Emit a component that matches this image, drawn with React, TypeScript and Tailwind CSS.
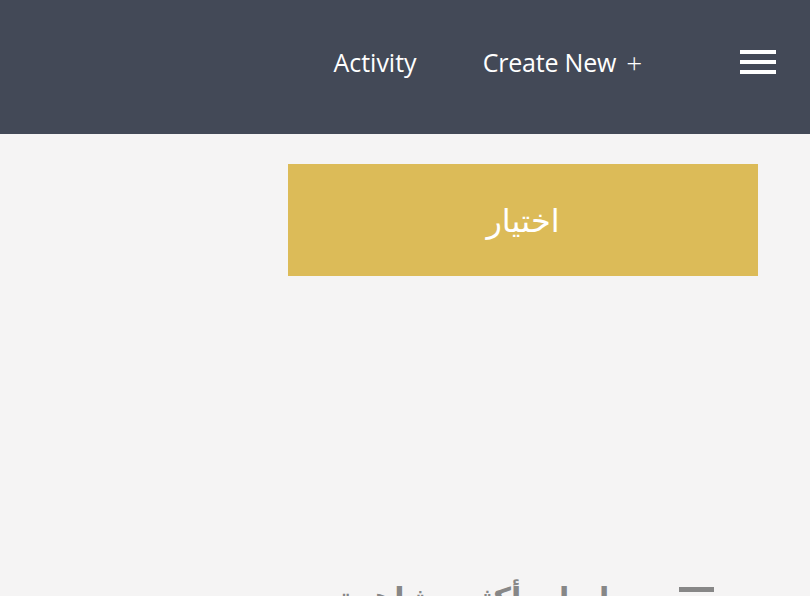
import React from "react";

export default function App() {
  return (
    <div className="w-[810px] h-[596px] overflow-hidden bg-[#f5f4f4]" style={{ fontFamily: '"Open Sans", "Noto Sans", sans-serif' }}>
      <header className="h-[134px] bg-[#434957] flex items-center justify-end pb-[10px] pr-[34px]">
        <span className="text-white text-[25px] leading-none mr-[66px]">Activity</span>
        <span className="text-white text-[25px] leading-none tracking-[-0.2px] flex items-center">
          Create New
          <span className="ml-[10px] text-[28px] leading-none font-light">+</span>
        </span>
        <button className="ml-[98px] w-[36px] flex flex-col gap-[6px]">
          <span className="block h-[4px] bg-white" />
          <span className="block h-[4px] bg-white" />
          <span className="block h-[4px] bg-white" />
        </button>
      </header>
      <main className="flex flex-col items-end pr-[52px] pt-[30px]">
        <div className="w-[470px] h-[112px] bg-[#dcbb58] flex items-center justify-center">
          <span dir="rtl" className="text-white text-[32px] leading-none" style={{ fontFamily: '"Noto Sans", "DejaVu Sans", sans-serif' }}>اختيار</span>
        </div>
        <div className="mt-[307px] flex items-start justify-end w-full pr-[44px] gap-[38px]">
          <h2 dir="rtl" className="text-[#878787] text-[30px] font-bold leading-none" style={{ fontFamily: '"Noto Sans", "DejaVu Sans", sans-serif' }}>
            مباريات أكثر مشاهدة
          </h2>
          <span className="block w-[35px] h-[5px] bg-[#878787] mt-[4px]" />
        </div>
      </main>
    </div>
  );
}
